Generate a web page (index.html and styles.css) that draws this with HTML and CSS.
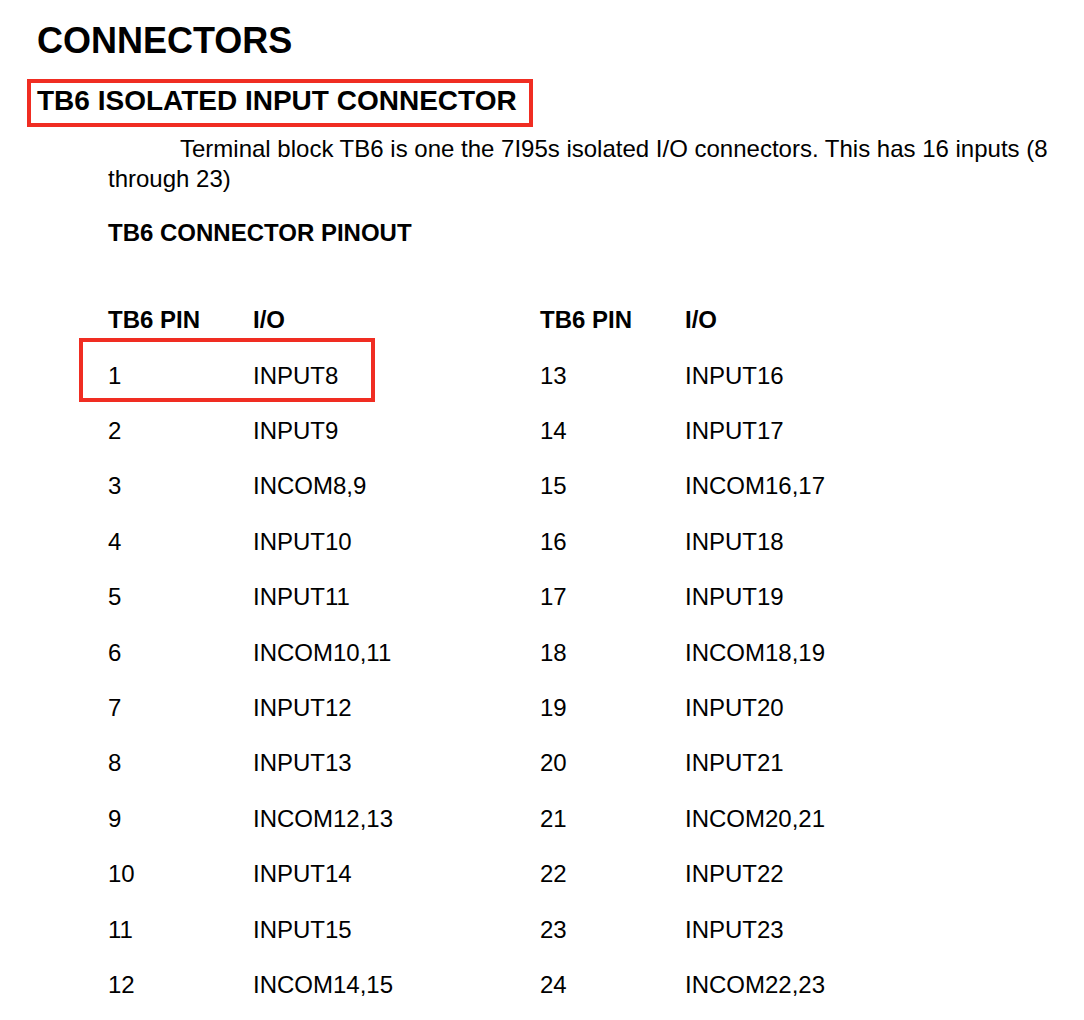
FILE: index.html
```html
<!DOCTYPE html>
<html lang="en">
<head>
    <meta charset="UTF-8">
    <title>Connectors - TB6 Isolated Input Connector</title>
    <link rel="stylesheet" href="styles.css">
</head>
<body>
    <div class="page">
        <h1 class="title">CONNECTORS</h1>

        <h2 class="section-title">TB6 ISOLATED INPUT CONNECTOR</h2>

        <p class="intro">Terminal block TB6 is one the 7I95s isolated I/O connectors. This has 16 inputs (8 through 23)</p>

        <h3 class="sub-title">TB6 CONNECTOR PINOUT</h3>

        <div class="pinout">
            <div class="highlight"></div>

            <div class="cell head">TB6 PIN</div>
            <div class="cell head">I/O</div>
            <div class="cell head">TB6 PIN</div>
            <div class="cell head">I/O</div>

            <div class="cell">1</div><div class="cell">INPUT8</div>
            <div class="cell">13</div><div class="cell">INPUT16</div>

            <div class="cell">2</div><div class="cell">INPUT9</div>
            <div class="cell">14</div><div class="cell">INPUT17</div>

            <div class="cell">3</div><div class="cell">INCOM8,9</div>
            <div class="cell">15</div><div class="cell">INCOM16,17</div>

            <div class="cell">4</div><div class="cell">INPUT10</div>
            <div class="cell">16</div><div class="cell">INPUT18</div>

            <div class="cell">5</div><div class="cell">INPUT11</div>
            <div class="cell">17</div><div class="cell">INPUT19</div>

            <div class="cell">6</div><div class="cell">INCOM10,11</div>
            <div class="cell">18</div><div class="cell">INCOM18,19</div>

            <div class="cell">7</div><div class="cell">INPUT12</div>
            <div class="cell">19</div><div class="cell">INPUT20</div>

            <div class="cell">8</div><div class="cell">INPUT13</div>
            <div class="cell">20</div><div class="cell">INPUT21</div>

            <div class="cell">9</div><div class="cell">INCOM12,13</div>
            <div class="cell">21</div><div class="cell">INCOM20,21</div>

            <div class="cell">10</div><div class="cell">INPUT14</div>
            <div class="cell">22</div><div class="cell">INPUT22</div>

            <div class="cell">11</div><div class="cell">INPUT15</div>
            <div class="cell">23</div><div class="cell">INPUT23</div>

            <div class="cell">12</div><div class="cell">INCOM14,15</div>
            <div class="cell">24</div><div class="cell">INCOM22,23</div>
        </div>
    </div>
</body>
</html>
```

FILE: styles.css
```css
* {
    margin: 0;
    padding: 0;
    box-sizing: border-box;
}

body {
    font-family: 'Liberation Sans', Helvetica, Arial, sans-serif;
    background: #ffffff;
    color: #000000;
}

.page {
    padding: 21px 20px 0 0;
}

.title {
    font-size: 36px;
    line-height: 40px;
    font-weight: bold;
    margin-left: 37px;
}

/* red frame around the section heading */
.section-title {
    width: 506px;
    margin: 18px 0 0 27px;
    padding: 0 0 5px 6px;
    border: 4px solid #f02d22;
    font-size: 28px;
    line-height: 35px;
    font-weight: bold;
}

.intro {
    margin: 7px 0 0 108px;
    font-size: 24px;
    line-height: 30px;
    text-indent: 72px;
}

.sub-title {
    margin: 24px 0 0 108px;
    font-size: 24px;
    line-height: 30px;
    font-weight: bold;
}

.pinout {
    position: relative;
    margin: 43px 0 0 108px;
    display: grid;
    grid-template-columns: 145px 287px 145px 1fr;
    grid-template-rows: 57px;
    grid-auto-rows: 55.4px;
    align-items: center;
    font-size: 24px;
}

.cell {
    line-height: 30px;
}

.cell.head {
    font-weight: bold;
}

.highlight {
    position: absolute;
    left: -29px;
    top: 47px;
    width: 296px;
    height: 64px;
    border: 4px solid #f02d22;
}
```
